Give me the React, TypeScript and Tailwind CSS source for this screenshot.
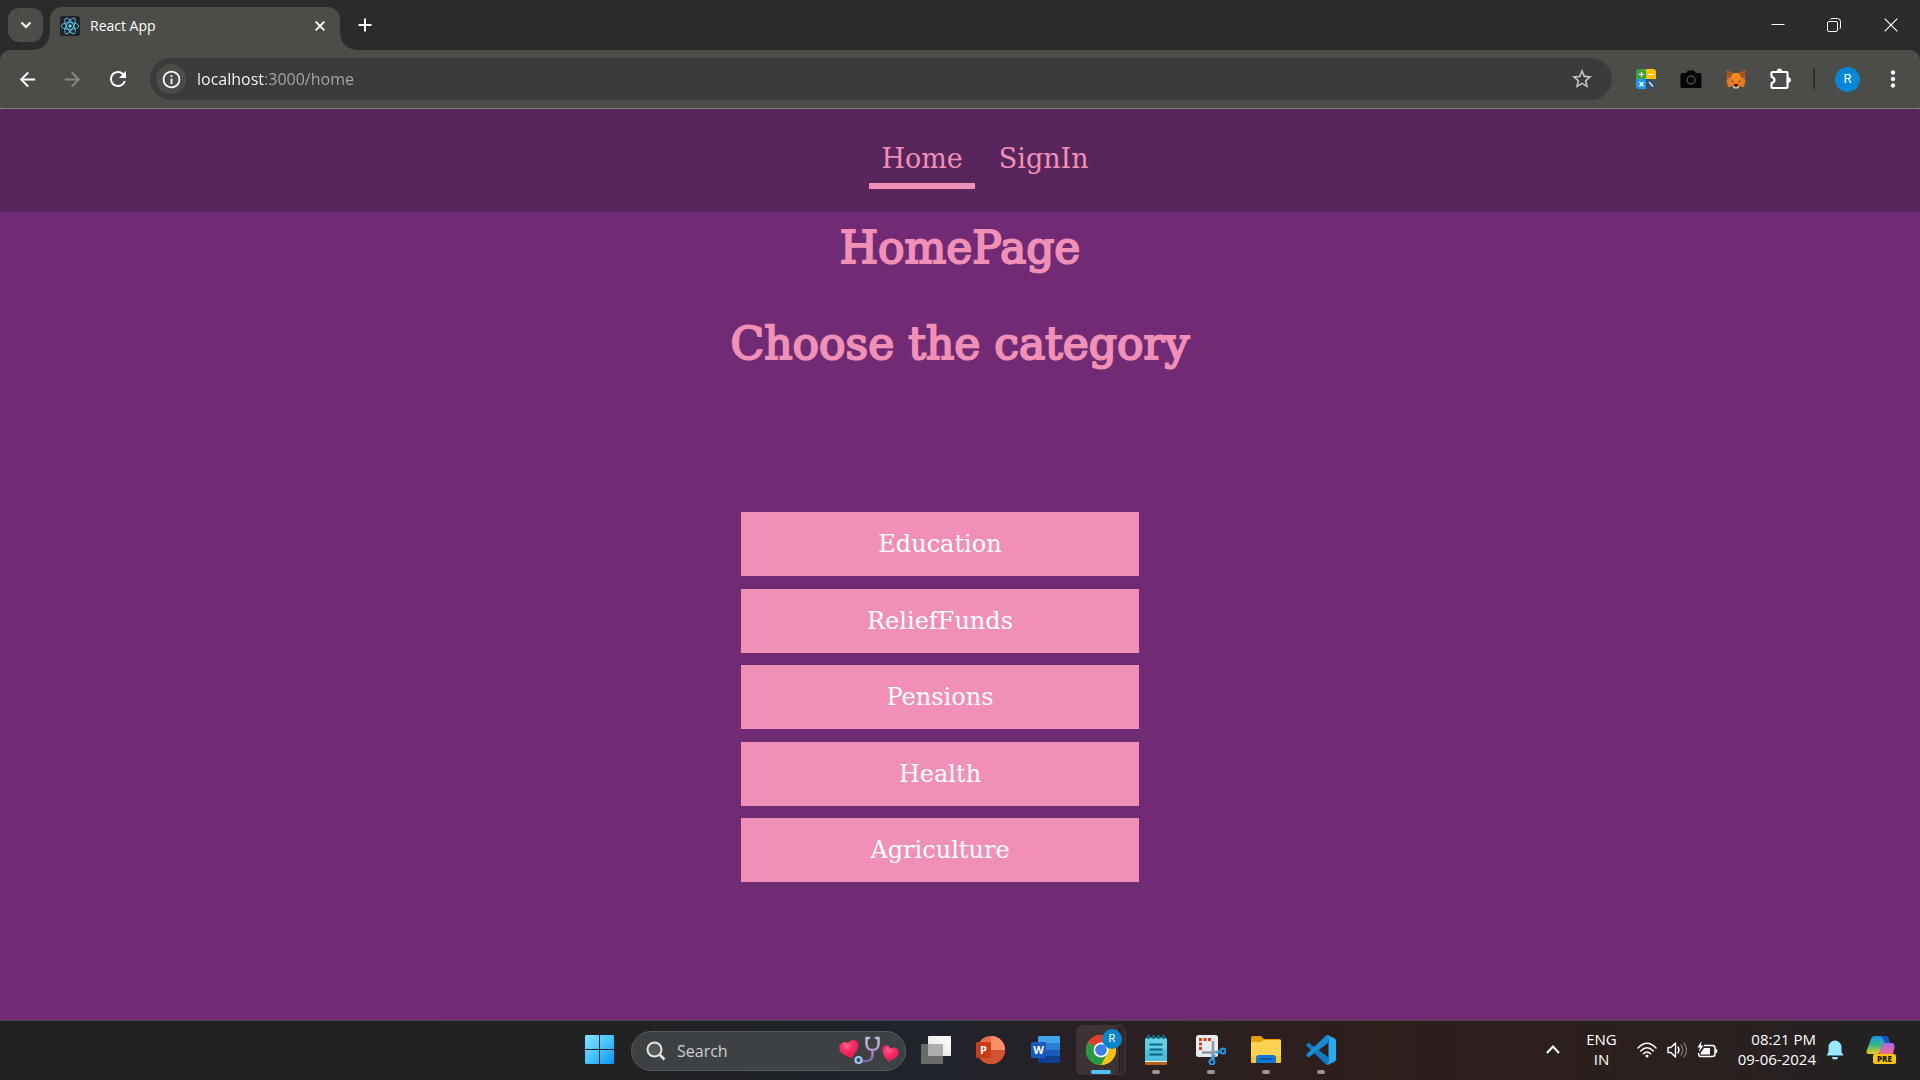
import React from "react";
import { MdArrowBack, MdArrowForward, MdInfoOutline, MdMoreVert, MdRefresh, MdStarBorder } from "react-icons/md";

const categories = ["Education", "ReliefFunds", "Pensions", "Health", "Agriculture"];

function ReactLogo() {
  return (
    <svg viewBox="0 0 20 20" className="size-5">
      <rect width="20" height="20" rx="2" fill="#20232a" />
      <g fill="none" stroke="#5ccbe8" strokeWidth="0.9">
        <ellipse cx="10" cy="10" rx="8.8" ry="3.4" />
        <ellipse cx="10" cy="10" rx="8.8" ry="3.4" transform="rotate(60 10 10)" />
        <ellipse cx="10" cy="10" rx="8.8" ry="3.4" transform="rotate(120 10 10)" />
      </g>
      <circle cx="10" cy="10" r="1.7" fill="#61dafb" />
    </svg>
  );
}

function TabStrip() {
  return (
    <header className="flex h-[50px] items-end bg-[#2b2b29] text-white">
      <button aria-label="Search tabs" className="mb-2 ml-2 flex h-[34px] w-[35px] items-center justify-center rounded-[11px] bg-[#4c4d48]">
        <svg viewBox="0 0 12 8" className="h-2 w-3" fill="none" stroke="currentColor" strokeWidth="2.2">
          <path d="M1.5 1.5 6 6l4.500-4.500" />
        </svg>
      </button>
      <div className="relative ml-[7px] flex h-[43px] w-[290px] items-center rounded-t-xl bg-[#4c4d48] pb-1.5 pl-2.5 pr-3">
        <span className="absolute -left-4 bottom-0 size-4 bg-[radial-gradient(circle_at_0_0,transparent_15px,#4c4d48_16px)]" />
        <span className="absolute -right-4 bottom-0 size-4 bg-[radial-gradient(circle_at_100%_0,transparent_15px,#4c4d48_16px)]" />
        <ReactLogo />
        <span className="ml-2.5 flex-1 text-[14px] leading-5">React App</span>
        <button aria-label="Close tab" className="flex size-4 items-center justify-center">
          <svg viewBox="0 0 10 10" className="size-2.5" fill="none" stroke="currentColor" strokeWidth="1.8">
            <path d="M.7.7l8.600 8.600M9.300.7.7 9.300" />
          </svg>
        </button>
      </div>
      <button aria-label="New tab" className="mb-[17px] ml-[17px] flex size-4 items-center justify-center">
        <svg viewBox="0 0 14 14" className="size-3.5" fill="none" stroke="currentColor" strokeWidth="2">
          <path d="M7 .5v13M.5 7h13" />
        </svg>
      </button>
      <div className="ml-auto flex h-full">
        <button aria-label="Minimize" className="flex w-[57px] items-center justify-center">
          <svg viewBox="0 0 14 14" className="size-3.5" stroke="currentColor" fill="none">
            <path d="M.5 6.500h13" />
          </svg>
        </button>
        <button aria-label="Restore" className="flex w-[56px] items-center justify-center">
          <svg viewBox="0 0 14 14" className="size-3.5" stroke="currentColor" fill="none">
            <rect x=".5" y="3.500" width="10" height="10" rx="1.500" />
            <path d="M3 1.500Q3.500.5 5 .5h5.500a3 3 0 0 1 3 3V9q0 1.500-1 2" />
          </svg>
        </button>
        <button aria-label="Close" className="flex w-[58px] items-center justify-center">
          <svg viewBox="0 0 14 14" className="size-3.5" stroke="currentColor" fill="none" strokeWidth="1.2">
            <path d="M.7.7l12.600 12.600M13.300.7.7 13.300" />
          </svg>
        </button>
      </div>
    </header>
  );
}

function CalculatorIcon() {
  return (
    <svg viewBox="0 0 20 20" className="size-5">
      <path d="M3 0h7v10H0V3a3 3 0 0 1 3-3Z" fill="#43a047" />
      <path d="M10 0h7a3 3 0 0 1 3 3v7H10Z" fill="#ffc107" />
      <path d="M0 10h10v10H3a3 3 0 0 1-3-3Z" fill="#2196f3" />
      <path d="M10 10h10v7a3 3 0 0 1-3 3h-7Z" fill="#37536b" />
      <path d="M3 5.500h5M5.500 3v5M12.500 5.500h5M3.500 13l4 4.500M7.500 13l-4 4.500M13 13l4 4.500" stroke="#fff" strokeWidth="1.2" />
    </svg>
  );
}

function CameraIcon() {
  return (
    <svg viewBox="0 0 22 18" className="h-[18px] w-[22px]">
      <path d="M2 3h4l2-2.500h6L16 3h4a1.500 1.500 0 0 1 1.500 1.500v12A1.500 1.500 0 0 1 20 18H2a1.500 1.500 0 0 1-1.500-1.500v-12A1.500 1.500 0 0 1 2 3Z" fill="#050505" />
      <circle cx="11" cy="10" r="4" fill="none" stroke="#4c4d48" strokeWidth="1.500" />
    </svg>
  );
}

function FoxIcon() {
  return (
    <svg viewBox="0 0 20 19" className="h-[19px] w-5">
      <path d="M.5.3 7 3h6L19.500.3l-1 7 1 5-2 5-4-1.300-1.500 2H8L6.500 16l-4 1.300-2-5 1-5Z" fill="#e8791f" />
      <path d="M.5.3 7 3 5 7.500 1.800 8ZM19.500.3 13 3l2 4.500 3.200.5Z" fill="#a3541f" />
      <path d="M5 7.500 7 3h6l2 4.500-3 4.500H8Z" fill="#f6871f" />
      <path d="m5.500 10.300 2.700 1.400-2 .1ZM14.500 10.300l-2.700 1.400 2 .1Z" fill="#24303f" />
      <path d="m8 15 .5-1h3l.5 1-1 2H9Z" fill="#201914" />
      <path d="m6.500 16 2 .3.700.8h1.600l.7-.8 2-.3-1.700 2.500H8.200Z" fill="#d8c4b4" />
    </svg>
  );
}

function PuzzleIcon() {
  return (
    <svg viewBox="0 0 22 22" className="size-[22px]">
      <path
        d="M2.500 4h14a1 1 0 0 1 1 1v14a1 1 0 0 1-1 1h-14a1 1 0 0 1-1-1v-3.700q3-1.300 3-3.300t-3-3.300V5a1 1 0 0 1 1-1Z"
        fill="none"
        stroke="#fff"
        strokeWidth="2.200"
        strokeLinejoin="round"
      />
      <path d="M7 3.500a2.500 2.500 0 0 1 5 0ZM18 9.500a2.500 2.500 0 0 1 0 5Z" fill="#fff" stroke="#fff" />
    </svg>
  );
}

function Toolbar() {
  return (
    <div className="bg-[#2b2b29]">
      <div className="flex h-[59px] items-center rounded-t-[10px] border-b border-[#7b7c78] bg-[#4c4d48] pr-3.5 pl-1 text-white">
        <button aria-label="Back" className="flex w-[46px] justify-center"><MdArrowBack size={23} /></button>
        <button aria-label="Forward" disabled className="flex w-[45px] justify-center text-[#888985]"><MdArrowForward size={23} /></button>
        <button aria-label="Reload" className="flex w-[45px] justify-center"><MdRefresh size={24} /></button>
        <div className="ml-2.5 flex h-[42px] min-w-0 flex-1 items-center rounded-full bg-[#3b3b39] pr-[18px] pl-1.5">
          <button aria-label="Site information" className="flex size-[30px] items-center justify-center rounded-full bg-[#4c4d48]">
            <MdInfoOutline size={21} />
          </button>
          <input
            aria-label="Address"
            defaultValue="localhost:3000/home"
            className="ml-[11px] min-w-0 flex-1 bg-[linear-gradient(90deg,#fff_67px,#a9aaa7_67px)] bg-clip-text text-[16px] leading-6 text-transparent outline-none"
          />
          <button aria-label="Bookmark this page" className="text-[#c4c5c1]"><MdStarBorder size={24} /></button>
        </div>
        <div className="ml-[11px] flex items-center">
          <button aria-label="Calculator" className="flex w-[45px] justify-center"><CalculatorIcon /></button>
          <button aria-label="Screen capture" className="flex w-[45px] justify-center"><CameraIcon /></button>
          <button aria-label="Wallet" className="flex w-[45px] justify-center"><FoxIcon /></button>
          <button aria-label="Extensions" className="flex w-[45px] justify-center"><PuzzleIcon /></button>
          <span className="ml-2.5 h-5 w-0.5 bg-[#2f302c]" />
          <button aria-label="Profile" className="ml-5 flex size-[25px] items-center justify-center rounded-full bg-[#0487d4] font-[Roboto] text-[13px]">R</button>
          <button aria-label="Menu" className="ml-5 flex justify-center"><MdMoreVert size={26} /></button>
        </div>
      </div>
    </div>
  );
}

function HomePage() {
  return (
    <main className="flex-1 bg-[#712b75] font-['DejaVu_Serif',serif] text-[#f190b7]">
      <nav className="flex h-[103px] items-center justify-center rounded bg-[#58255c] pl-[50px] text-[27px] leading-8">
        <a href="#home" className="border-b-[6px] border-[#f190b7] px-3 pt-2.5 pb-2">Home</a>
        <a href="#signin" className="ml-3 border-b-[6px] border-transparent px-3 pt-2.5 pb-2">SignIn</a>
      </nav>
      <h1 className="pt-2.5 text-center text-[44px] leading-[52px] [-webkit-text-stroke:2px_#f190b7]">HomePage</h1>
      <h1 className="mt-11 text-center text-[44px] leading-[52px] [-webkit-text-stroke:2px_#f190b7]">Choose the category</h1>
      <div className="mt-[142px] flex justify-center pr-10">
        <div className="flex h-[370px] w-[398px] flex-col justify-between">
          {categories.map((name) => (
            <button key={name} className="h-16 bg-[#f190b7] text-[24px] leading-8 text-white">{name}</button>
          ))}
        </div>
      </div>
    </main>
  );
}

function WindowsIcon() {
  return (
    <svg viewBox="0 0 29 29" className="size-[29px]">
      <defs>
        <linearGradient id="win" x1="0" y1="0" x2="29" y2="29" gradientUnits="userSpaceOnUse">
          <stop stopColor="#8be0ff" />
          <stop offset=".5" stopColor="#45c4fb" />
          <stop offset="1" stopColor="#0e92f5" />
        </linearGradient>
      </defs>
      <path d="M1 0h13v14H0V1Zm14 0h13l1 1v13H15ZM0 15h14v14H1l-1-1Zm15 0h14v13l-1 1H15Z" fill="url(#win)" />
    </svg>
  );
}

function StethoscopeArt() {
  return (
    <svg viewBox="0 0 60 30" className="h-[30px] w-[60px]">
      <defs>
        <radialGradient id="heart" cx=".4" cy=".3" r=".7">
          <stop stopColor="#ff6a94" />
          <stop offset=".4" stopColor="#fb2f6c" />
          <stop offset="1" stopColor="#e8194f" />
        </radialGradient>
        <linearGradient id="tube" x1="0" y1="0" x2="0" y2="1">
          <stop stopColor="#b6c6da" />
          <stop offset=".5" stopColor="#b197cf" />
          <stop offset="1" stopColor="#7b659c" />
        </linearGradient>
      </defs>
      <path d="M9 7.500C11 2.500 19 3 19.200 8.500c.2 5-3.200 8.500-6.200 13.500C8 20.500.5 18 .3 12 .2 6.500 6.500 4 9 7.500Z" fill="url(#heart)" />
      <path d="M51 13c3-3 8.500-1.500 8.500 3.500 0 5-5.500 7-10.500 9-2.500-4-6.500-8-5.500-13C44.500 8 50.500 8.500 51 13Z" fill="url(#heart)" />
      <path d="M30 2h-2.500v6c0 8 12 8 12 0V2H37M33.500 14v5c0 5-4 7-12 6" fill="none" stroke="url(#tube)" strokeWidth="2.500" strokeLinecap="round" strokeLinejoin="round" />
      <circle cx="19.500" cy="24" r="3" fill="#3b4150" stroke="#9fc8f0" strokeWidth="2.200" />
    </svg>
  );
}

function TaskViewIcon() {
  return (
    <svg viewBox="0 0 30 28" className="h-7 w-[30px]">
      <defs>
        <linearGradient id="tv" x1="0" y1="1" x2="1" y2="0">
          <stop stopColor="#dedede" />
          <stop offset="1" stopColor="#fff" />
        </linearGradient>
      </defs>
      <rect y="8" width="22" height="20" rx="1" fill="#6a6a6a" />
      <rect x="7" width="23" height="20" rx="1" fill="url(#tv)" />
      <path d="M7 8h15v12H7Z" fill="#adadad" />
    </svg>
  );
}

function PowerPointIcon() {
  return (
    <svg viewBox="0 0 29 28" className="h-7 w-[29px]">
      <circle cx="15" cy="14" r="14" fill="#ed6c47" />
      <path d="M15 0a14 14 0 0 1 14 14H15Z" fill="#ff8f6b" />
      <path d="M1 14h28a14 14 0 0 1-28 0Z" fill="#d35230" />
      <rect y="6" width="15" height="16" rx="1.300" fill="#c43e1c" />
      <text x="7.500" y="18" textAnchor="middle" fontFamily="Open Sans, sans-serif" fontSize="11" fontWeight="700" fill="#fff">P</text>
    </svg>
  );
}

function WordIcon() {
  return (
    <svg viewBox="0 0 29 27" className="h-[27px] w-[29px]">
      <path d="M8 0h20l1 1v6H7V1Z" fill="#41a5ee" />
      <path d="M7 7h22v7H7Z" fill="#2b7cd3" />
      <path d="M7 14h22v6.500H7Z" fill="#185abd" />
      <path d="M7 20.500h22V26l-1 1H8l-1-1Z" fill="#103f91" />
      <rect y="6" width="15" height="16" rx="1.300" fill="#185abd" />
      <text x="7.500" y="18" textAnchor="middle" fontFamily="Open Sans, sans-serif" fontSize="11" fontWeight="700" fill="#fff">W</text>
    </svg>
  );
}

function ChromeIcon() {
  return (
    <svg viewBox="0 0 30 30" className="size-[30px]">
      <circle cx="15" cy="15" r="15" fill="#fbc116" />
      <path d="M15 15 2 7.500A15 15 0 0 1 28 7.500Z" fill="#e33b2e" />
      <path d="M2 7.500A15 15 0 0 0 15 30l6.500-11.200L15 15Z" fill="#269a45" />
      <path d="M15 7.500h13a15 15 0 0 1-13 22.500l6.500-11.200Z" fill="#fbc116" />
      <circle cx="15" cy="15" r="7.500" fill="#fff" />
      <circle cx="15" cy="15" r="5.800" fill="#3b7ded" />
    </svg>
  );
}

function NotepadIcon() {
  return (
    <svg viewBox="0 0 22 30" className="h-[30px] w-[22px]">
      <rect y="20" width="22" height="10" rx="1.500" fill="#b4601d" />
      <path d="M0 20h22v7H0Z" fill="#e9eff2" />
      <path d="M1.500 2.500h19L22 4v22H0V4Z" fill="#62d0e4" />
      <path d="M0 15h22v11H0Z" fill="#4bbfd9" />
      <path d="M3.500 0v4M8.500 0v4M13.500 0v4M18.500 0v4" stroke="#0f6e8a" strokeWidth="2.500" />
      <path d="M4.500 9.500h13M4.500 14.500h13M4.500 19.500h13" stroke="#0b6580" strokeWidth="1.800" />
    </svg>
  );
}

function SnippingIcon() {
  return (
    <svg viewBox="0 0 30 30" className="size-[30px]">
      <rect width="22" height="22" rx="2.500" fill="#e8ebef" />
      <path d="M15 4.500H4.500V16" fill="none" stroke="#d6410f" strokeWidth="3" strokeDasharray="3 1.500" />
      <path d="M17 6v10l-1 9M6 17.500h11l7-1" fill="none" stroke="#8d99a5" strokeWidth="2.500" />
      <circle cx="27" cy="16" r="2.500" fill="none" stroke="#1c9ae5" strokeWidth="2" />
      <circle cx="16" cy="27" r="2.500" fill="none" stroke="#1c9ae5" strokeWidth="2" />
      <path d="m17.500 24.500 1-5M24.500 17l-4 .7" stroke="#1c9ae5" strokeWidth="2.200" />
    </svg>
  );
}

function FolderIcon() {
  return (
    <svg viewBox="0 0 30 27" className="h-[27px] w-[30px]">
      <path d="M0 2Q0 0 2 0h8l3 3h16l1 1v8H0Z" fill="#e3a008" />
      <path d="M0 6h10l3-2h16l1 1v21l-1 1H1l-1-1Z" fill="#ffd352" />
      <path d="M0 20h30v6l-1 1H1l-1-1Z" fill="#fcc531" />
      <path d="M5 27v-5q0-3 3-3h14q3 0 3 3v5Z" fill="#0f78d4" />
      <path d="M9 23h12" stroke="#08437e" strokeWidth="1.200" />
    </svg>
  );
}

function CodeEditorIcon() {
  return (
    <svg viewBox="0 0 30 30" className="size-[30px]">
      <path d="M22 22 2.500 7.500.5 9.200v1.600L20 29.500l3 .5Z" fill="#1479c4" />
      <path d="M22 8 2.500 22.500.5 20.800v-1.600L20 .5l3-.5Z" fill="#1a8ad6" />
      <path d="M21 0l7 3q2 1 2 2.500v19q0 1.500-2 2.500l-7 3q1.500-1 1.500-3V3q0-2-1.500-3Z" fill="#2aa9f3" />
    </svg>
  );
}

function TaskButton({ label, running = false, children }: { label: string; running?: boolean; children: React.ReactNode }) {
  return (
    <button aria-label={label} className="relative flex h-full w-[55px] items-center justify-center pb-0.5">
      {children}
      {running && <span className="absolute bottom-1.5 h-1 w-2 rounded-full bg-[#9c9594]" />}
    </button>
  );
}

function Tray() {
  return (
    <div className="flex items-center justify-end pr-6 pb-0.5 text-[15px] leading-5 text-white">
      <button aria-label="Show hidden icons">
        <svg viewBox="0 0 14 9" className="h-[9px] w-3.5" fill="none" stroke="currentColor" strokeWidth="2">
          <path d="m1 8 6-6.500L13 8" />
        </svg>
      </button>
      <button className="ml-[26px] pb-0.5 text-center">ENG<br />IN</button>
      <button aria-label="Network, volume and battery" className="ml-5 flex items-center gap-2.5">
        <svg viewBox="0 0 20 16" className="h-4 w-5" fill="none" stroke="currentColor" strokeWidth="1.500" strokeLinecap="round">
          <path d="M1 6q9-9.500 18 0M3.700 9q6.300-6.500 12.600 0M6.300 11.700q3.700-3.500 7.400 0" />
          <circle cx="10" cy="14" r="1.500" fill="currentColor" stroke="none" />
        </svg>
        <svg viewBox="0 0 20 18" className="h-[18px] w-5" fill="none" stroke="currentColor" strokeWidth="1.400" strokeLinejoin="round" strokeLinecap="round">
          <path d="M1 6.500h2.800L8.500 2v14l-4.700-4.500H1Z" />
          <path d="M11 6q2 3 0 6" />
          <path d="M14 4q3.500 5 0 10M17 2q5 7 0 14" stroke="#75706f" />
        </svg>
        <svg viewBox="0 0 21 18" className="h-[18px] w-[21px]" fill="none" stroke="currentColor" strokeWidth="1.500">
          <path d="M7 4.500h8.500q2.500 0 2.500 2.500v6q0 2.500-2.500 2.500h-12Q1.500 15.500 1.500 12" />
          <path d="M3.500 12 7 7h6v6.500H3.500ZM18.500 8h1.500q.8 2 0 4h-1.500Z" fill="currentColor" stroke="none" />
          <path d="M4.500 0 .5 6.500h2.300L2 11l4.500-6.500H4Z" fill="currentColor" stroke="none" />
        </svg>
      </button>
      <button className="ml-5 pb-0.5 text-right">08:21 PM<br />09-06-2024</button>
      <button aria-label="Notifications" className="ml-2.5">
        <svg viewBox="0 0 18 20" className="h-5 w-[18px]">
          <path d="M9 .5a6.500 6.500 0 0 1 6.500 6.500v5l2 3.500H.5L2.500 12V7A6.500 6.500 0 0 1 9 .5ZM6 17h6a3 2.500 0 0 1-6 0Z" fill="#99e6ff" />
        </svg>
      </button>
      <button aria-label="Copilot" className="ml-[22px]">
        <svg viewBox="0 0 30 30" className="size-[30px]">
          <defs>
            <linearGradient id="cl" x1="0" y1="0" x2="0" y2="1">
              <stop stopColor="#1594e8" />
              <stop offset=".5" stopColor="#35b78b" />
              <stop offset="1" stopColor="#f0ca18" />
            </linearGradient>
            <linearGradient id="cr" x1="0" y1="0" x2="0" y2="1">
              <stop stopColor="#b065f2" />
              <stop offset="1" stopColor="#f06a8c" />
            </linearGradient>
          </defs>
          <path d="M9 1h10q3 0 4 4l1 3h-5q-2 0-3 3l-2 6q-1 2-3 2H3q-3 0-2.500-3L5 4q1-3 4-3Z" fill="url(#cl)" />
          <path d="M14 1h5q3 0 4 4l1 3h-5q-3-7-5-7Z" fill="#1b50c4" />
          <path d="M19 8h6q4 0 3.500 4L27 19H13l3-8q1-3 3-3Z" fill="url(#cr)" />
          <rect x="7" y="19" width="23" height="10" rx="2" fill="#f8c40c" />
          <text x="18.500" y="27" textAnchor="middle" fontFamily="Open Sans, sans-serif" fontSize="8" fontWeight="800" fill="#221c08">PRE</text>
        </svg>
      </button>
    </div>
  );
}

function Taskbar() {
  return (
    <footer className="grid h-[60px] grid-cols-[1fr_auto_1fr] border-t border-[#4a4a48] bg-[linear-gradient(90deg,#202020_0%,#202224_34%,#1f232c_48%,#2b2021_60%,#2e1e1c_72%,#2a201f_88%,#222222_100%)]">
      <span />
      <div className="flex items-center">
        <TaskButton label="Start"><WindowsIcon /></TaskButton>
        <label className="mr-0.5 ml-1 flex h-10 w-[275px] items-center rounded-full border border-[#585a5d] bg-[#3e4144] pr-1.5 pl-3.5">
          <svg viewBox="0 0 20 20" className="size-5" fill="none" stroke="#e4e4e4" strokeWidth="2">
            <circle cx="8.500" cy="8.500" r="7" fill="#55585b" />
            <path d="m13.500 13.500 5 5" strokeWidth="2.600" />
          </svg>
          <input aria-label="Search" placeholder="Search" className="ml-[11px] min-w-0 flex-1 text-[16px] leading-6 outline-none placeholder:text-[#cfcfcf]" />
          <StethoscopeArt />
        </label>
        <TaskButton label="Task view"><TaskViewIcon /></TaskButton>
        <TaskButton label="PowerPoint"><PowerPointIcon /></TaskButton>
        <TaskButton label="Word"><WordIcon /></TaskButton>
        <button aria-label="Chrome" className="relative flex h-full w-[55px] items-center justify-center pb-0.5">
          <span className="absolute h-[50px] w-[50px] rounded-md border border-[#463a3b] bg-[#33292a]" />
          <span className="absolute left-[3px] h-[50px] w-11 rounded-md border-r border-[#241b1c] bg-[#3d3334]" />
          <span className="relative"><ChromeIcon /></span>
          <span className="absolute top-2 right-1.5 flex size-5 items-center justify-center rounded-full bg-[#0c84cb] font-[Roboto] text-[11px] text-white">R</span>
          <span className="absolute bottom-1.5 h-1 w-5 rounded-full bg-[#4cc2ff]" />
        </button>
        <TaskButton label="Notepad" running><NotepadIcon /></TaskButton>
        <TaskButton label="Snipping Tool" running><SnippingIcon /></TaskButton>
        <TaskButton label="File Explorer" running><FolderIcon /></TaskButton>
        <TaskButton label="Code editor" running><CodeEditorIcon /></TaskButton>
      </div>
      <Tray />
    </footer>
  );
}

export default function App() {
  return (
    <div className="flex min-h-screen flex-col font-['Open_Sans',sans-serif]">
      <TabStrip />
      <Toolbar />
      <HomePage />
      <Taskbar />
    </div>
  );
}
